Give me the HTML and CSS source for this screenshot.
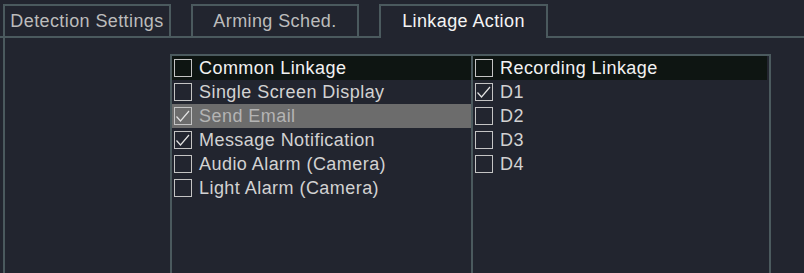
FILE: index.html
```html
<!DOCTYPE html>
<html lang="en">
<head>
    <meta charset="UTF-8">
    <meta name="viewport" content="width=device-width, initial-scale=1.0">
    <title>Linkage Action</title>
    <link rel="stylesheet" href="styles.css">
</head>
<body>
    <nav class="tabs">
        <div class="tab">Detection Settings</div>
        <div class="tab">Arming Sched.</div>
        <div class="tab active">Linkage Action</div>
    </nav>

    <div class="panel">
        <div class="lists">
            <ul class="list">
                <li class="head"><span class="box"></span>Common Linkage</li>
                <li><span class="box"></span>Single Screen Display</li>
                <li class="selected"><span class="box"><svg viewBox="0 0 16 16"><polyline points="1.5,8.5 5.5,13 14,3"/></svg></span>Send Email</li>
                <li><span class="box"><svg viewBox="0 0 16 16"><polyline points="1.5,8.5 5.5,13 14,3"/></svg></span>Message Notification</li>
                <li><span class="box"></span>Audio Alarm (Camera)</li>
                <li><span class="box"></span>Light Alarm (Camera)</li>
            </ul>
            <ul class="list">
                <li class="head"><span class="box"></span>Recording Linkage</li>
                <li><span class="box"><svg viewBox="0 0 16 16"><polyline points="1.5,8.5 5.5,13 14,3"/></svg></span>D1</li>
                <li><span class="box"></span>D2</li>
                <li><span class="box"></span>D3</li>
                <li><span class="box"></span>D4</li>
            </ul>
        </div>
    </div>
</body>
</html>
```

FILE: styles.css
```css
body {
    margin: 0;
    height: 273px;
    overflow: hidden;
    font-family: "Liberation Sans", Arial, sans-serif;
    background-color: #22252f;
    color: #d2d2d2;
}

/* Tab bar */
.tabs {
    display: flex;
    gap: 20px;
    padding: 4px 0 0 3px;
    border-bottom: 2px solid #4b5a5e;
}

.tab {
    width: 164px;
    height: 30px;
    line-height: 31px;
    border: 2px solid #4b5a5e;
    border-bottom: none;
    text-align: center;
    font-size: 18px;
    letter-spacing: 0.4px;
    color: #bcbcbc;
}

.tab.active {
    width: 165px;
    height: 32px;
    margin-bottom: -2px;
    background-color: #22252f;
    color: #f4f4f4;
}

/* Panel */
.panel {
    box-sizing: border-box;
    height: 235px;
    margin-left: 3px;
    padding: 16px 0 0 165px;
    border-left: 2px solid #4b5a5e;
}

.lists {
    display: grid;
    grid-template-columns: 299px 296px;
    width: 597px;
    height: 219px;
    border: 2px solid #4b5a5e;
    border-bottom: none;
}

.list {
    list-style: none;
    margin: 0;
    padding: 0;
}

.list + .list {
    border-left: 2px solid #4b5a5e;
}

.list li {
    display: flex;
    align-items: center;
    gap: 7px;
    height: 24px;
    padding-left: 2px;
    font-size: 18px;
    letter-spacing: 0.45px;
    white-space: nowrap;
}

.list li.head {
    background-color: #0e1512;
    color: #f2f2f2;
}

.list li.selected {
    background-color: #6c6c6c;
    color: #b4b4b4;
}

.box {
    box-sizing: border-box;
    width: 18px;
    height: 18px;
    border: 1px solid #c4c4c4;
    flex-shrink: 0;
}

.box svg {
    display: block;
    width: 16px;
    height: 16px;
    fill: none;
    stroke: #e2e2e2;
    stroke-width: 1.2;
}
```
